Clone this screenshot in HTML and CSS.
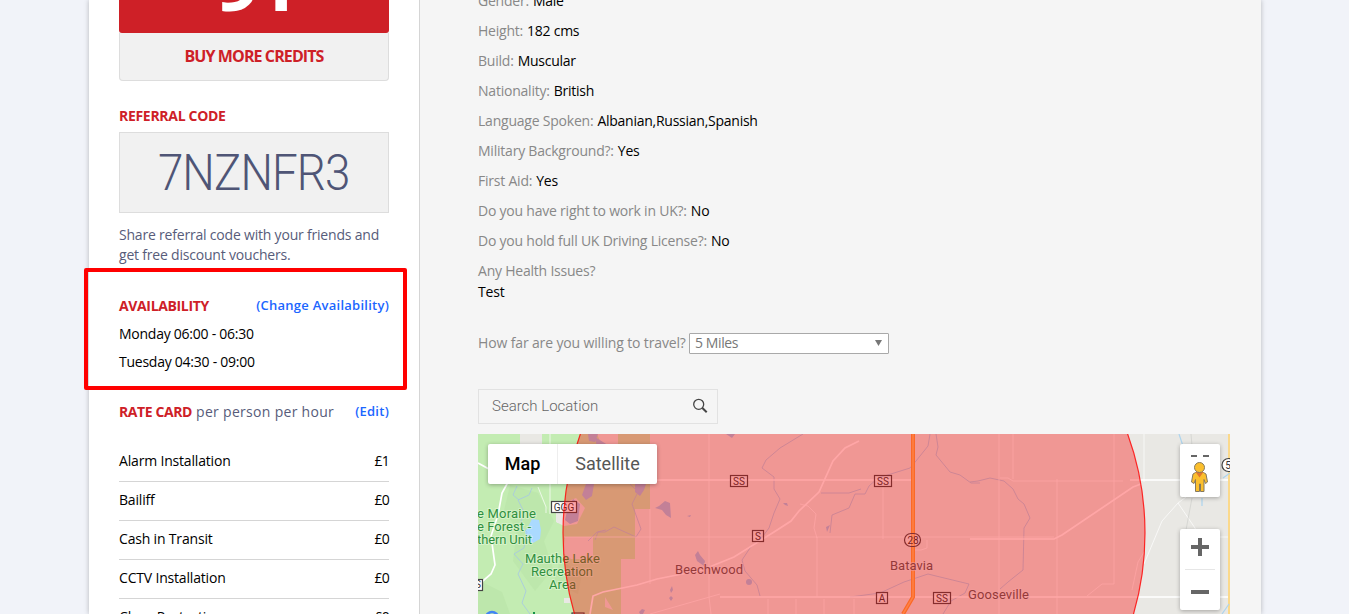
FILE: index.html
```html
<!DOCTYPE html>
<html lang="en">
<head>
<meta charset="utf-8">
<title>Profile</title>
<link rel="stylesheet" href="styles.css">
</head>
<body>
<div class="page">
  <aside class="sidebar">
    <div class="credits">
      <div class="credits-count"><div class="credits-number">91</div></div>
      <div class="credits-buy"><span>BUY MORE CREDITS</span></div>
    </div>
    <h3 class="heading referral-title">REFERRAL CODE</h3>
    <div class="referral-code"><span>7NZNFR3</span></div>
    <p class="referral-note">Share referral code with your friends and<br><span class="note-end">get free discount vouchers.</span></p>
    <section class="availability">
      <div class="row-head"><h3 class="heading avail">AVAILABILITY</h3><a class="link">(Change Availability)</a></div>
      <div class="slot">Monday 06:00 - 06:30</div>
      <div class="slot">Tuesday 04:30 - 09:00</div>
    </section>
    <div class="row-head rate-head"><h3 class="heading rate">RATE CARD</h3><span class="per">per person per hour</span><a class="link edit">(Edit)</a></div>
    <ul class="rates">
      <li><span>Alarm Installation</span><b>£1</b></li>
      <li><span>Bailiff</span><b>£0</b></li>
      <li><span>Cash in Transit</span><b>£0</b></li>
      <li><span>CCTV Installation</span><b>£0</b></li>
      <li><span>Close Protection</span><b>£0</b></li>
    </ul>
  </aside>
  <main class="main">
    <dl class="facts">
      <div><dt>Gender:</dt><dd>Male</dd></div>
      <div><dt>Height:</dt><dd>182 cms</dd></div>
      <div><dt>Build:</dt><dd>Muscular</dd></div>
      <div><dt>Nationality:</dt><dd>British</dd></div>
      <div><dt>Language Spoken:</dt><dd>Albanian,Russian,Spanish</dd></div>
      <div><dt>Military Background?:</dt><dd>Yes</dd></div>
      <div><dt>First Aid:</dt><dd>Yes</dd></div>
      <div><dt>Do you have right to work in UK?:</dt><dd>No</dd></div>
      <div><dt>Do you hold full UK Driving License?:</dt><dd>No</dd></div>
      <div><dt>Any Health Issues?</dt></div>
    </dl>
    <div class="health">Test</div>
    <div class="travel"><span class="travel-label">How far are you willing to travel?</span>
      <div class="select"><span>5 Miles</span><svg width="7" height="6" viewBox="0 0 7 6"><path d="M0 0h7L3.500 6z" fill="#777"/></svg></div>
    </div>
    <div class="search"><span>Search Location</span>
      <svg width="16" height="16" viewBox="0 0 16 16" fill="none" stroke="#444"><circle cx="6.700" cy="6.300" r="5" stroke-width="1.300"/><path d="M10.400 10l4.300 4.300" stroke-width="2"/></svg>
    </div>
    <div class="map">
      <svg class="map-canvas" width="752" height="180" viewBox="478 434 752 180">
        <rect x="478" y="434" width="752" height="180" fill="#e9e8e4"/>
        <path class="park" d="M478 434H650V509H635V559H621V614H478z"/>
        <path fill="#b5e3a3" opacity=".45" d="M510 485l28 8 16 28-10 20 9 28-18 22-22-30 4-32-13-18zM478 580l24 12 8 22h-32zM560 560l22 14-4 20-24-12z"/>
        <path fill="#e9e8e4" d="M520 434h22v10h-22zM556 506l20-8 9 10-8 16-13 2-8-4zM565 537h28v22h-22l-8-6zM597 434h21v12h-16zM564 598h6v5h-6zM605 597l8 13-8-3zM556 512l7-7v18h-6z"/>
        <g class="water">
          <path class="lake" d="M525 532l3-5 4-8 7 1 2 10-1 9-7 4-5-2z"/>
          <path d="M586 484h8l-2 12-6 4-4-5zM635 484h11l-2 6-4 6-5-4zM567 511l6-12 7 5-2 17-8 3-5-4zM595 437l8 5 8 5-8 7-6-6zM588 434h10l-3 8-6-1zM655 508l4-2 6-5 5 2 1 15-5-3-4-5zM695 555l3-4 2 4 5 6-1 5-7-5zM670 590l2-4 1 4-2 3zM669 598l2-2 2 2-2 3zM639 612l3-3 3 1-2 4h-3zM687 516l4-1-1 2z"/>
          <circle cx="749" cy="582" r="3"/><path d="M726 434h9l-3 4zM826 527l4-2-3 7zM783 503l4 0 1 3-3-1z"/>
        </g>
        <g class="stream">
          <path d="M532 488l-3 7-11 5 6 12-4 13 7 7-3 16-10 6 9 10-5 10 8 17-4 12 8 11M519 500l-6-5 4-9M595 540l3-8 7 0 9-5 22 10 5-8-9-25 6-12-10-10M588 541l9-9 9-2M803 434l-23 14-14 12-4 8 12 9 0 12 6 10-6 14-5 15-6 8-13 12-8 12 3 11 12 14 3 11M930 434l-2 12-12 15-6 7-32 10-9 8-4 8-10 0-6 14-17 7-2 18M821 493l28 0 12-4M936 434l2 13-2 8 14 17 10 3 11 8 9 0M850 597l30-4 24-11 24-8 8 2 33 8-4 9-14 8-8 13M970 482l8-1 12-3 14 3 9 8 5 10 6 5 6 14-6 10-1 42-15 12-8 7"/>
        </g>
        <g class="roads">
          <path d="M478 463l20 11 14-6M512 475l-10 18-4 22-7 21 4 29-4 9-13 11M652 480H913M1130 480h100M590 614l3-18 10-4 34-7 20-6 45-9 32-13 40-25 17-11 8-10 20-19 14-31 12-13 14-7M720 597H960M960 597h270M970 539h84l8-4 71-48 8-3" />
        </g>
        <g class="roads thin">
          <path d="M564 537h490M709 434v163l2 17M650 509v75M650 614l70-20M817 537v60M883 482v57M800 504l8 2 8 8-2 14 3 10M999 434v180M1013 434v45M1057 479v135M1114 434v150h-12l-15 12M1144 434v48M1144 564l18-43 16-18 8-6M1178 503l17 25 4 16M1200 537h30M768 599v15M796 599v15M824 599v15M854 599v15M927 540v8l-6 2h-9M1000 478h8l5 3h110M1132 590l6-28 6-10M550 434v80M538 487l8 20 0 6"/>
        </g>
        <path stroke="#f9a13a" stroke-width="4" fill="none" d="M913 434v163l-10 17"/><path stroke="#ffc56b" stroke-width="1.500" fill="none" d="M913 434v163l-10 17"/>
        <path stroke="#fbd98b" stroke-width="2" fill="none" d="M1229 434v180"/>
        <path stroke="#add4ee" stroke-width="1.200" fill="none" d="M1179 434l4 12M1202 498v8M1230 473l-7 5M1229 604l-7 10"/>
        <path stroke="#cacbc8" stroke-width=".6" fill="none" d="M1191 434l1 12M1192 498l-6 32"/>
        <g class="place park-name">
          <text x="477" y="518" textLength="59">e Moraine</text><text x="477" y="531" textLength="54">e Forest -</text><text x="477" y="544" textLength="55">thern Unit</text>
          <text x="525" y="563" textLength="75">Mauthe Lake</text><text x="531" y="576" textLength="62">Recreation</text><text x="549" y="589" textLength="27">Area</text>
        </g>
        <g class="place town"><text x="675" y="574" textLength="68">Beechwood</text><text x="890" y="570" textLength="43">Batavia</text><text x="968" y="599" textLength="61">Gooseville</text></g>
        <g class="shield">
          <rect class="solid" x="551.500" y="501.500" width="25" height="11"/><rect x="730.500" y="475.500" width="17" height="11"/><rect x="874.500" y="475.500" width="17" height="11"/><rect x="752.500" y="530.500" width="11" height="11"/><rect x="876.500" y="592.500" width="11" height="11"/><rect x="933.500" y="592.500" width="17" height="11"/><rect class="solid" x="470.500" y="579.500" width="12" height="11"/><rect x="904.500" y="533.500" width="16" height="13" rx="6.500"/><circle class="solid" cx="1228.500" cy="465" r="6.500"/><rect x="572" y="613" width="12" height="6"/>
          <text x="564" y="511">GGG</text><text x="739" y="485">SS</text><text x="883" y="485">SS</text><text x="758" y="540">S</text><text x="882" y="602">A</text><text x="942" y="602">SS</text><text x="913" y="543.500">28</text><text x="1228" y="469">5</text><text x="478" y="588">S</text>
        </g>
        <circle cx="854" cy="533" r="291" fill="#f00" fill-opacity=".35" stroke="#f00" stroke-opacity=".8" stroke-width="1.200"/>
        <circle cx="492" cy="618" r="6" fill="none" stroke="#4285f4" stroke-width="2.500"/><path fill="#159447" d="M533 612h2v2h-2z"/>
      </svg>
      <div class="map-type"><span class="on">Map</span><span>Satellite</span></div>
      <div class="pegman">
        <svg width="40" height="53" viewBox="0 0 40 53"><path fill="#666" d="M11 11h6v2h-6zM23 11h6v2h-6z"/><path fill="#fbbf2d" stroke="#85795e" stroke-width="1" d="M15.500 28.500h8l2.500 1.500 1.500 8-2 1.500-1.500-4v12h-3.500V40h-1v7.500h-4v-12l-1.500 4-2.500-1.500 1.500-8z"/><path fill="#e2762d" d="M15.500 28h8l-4 5.500z"/><circle cx="19.500" cy="23.500" r="5" fill="#fbbf2d" stroke="#85795e"/></svg>
      </div>
      <div class="zoom"><svg width="40" height="81" viewBox="0 0 40 81"><path fill="#666" d="M11 16h7V9h4v7h7v4h-7v7h-4v-7h-7zM11 61h18v4H11z"/><path fill="#e6e6e6" d="M5 40h30v1H5z"/></svg></div>
    </div>
  </main>
</div>
<div class="highlight"></div>
</body>
</html>
```
FILE: styles.css
```css
* { box-sizing: border-box; }
body { margin: 0; height: 614px; overflow: hidden; background: #f1f3f9; font: 14px/20px "Open Sans", "Noto Sans", sans-serif; color: #000; }
.page { display: flex; width: 1172px; height: 614px; margin-left: 89px; background: #f5f5f5; box-shadow: 0 0 5px rgba(0,0,0,.25); overflow: hidden; }
.sidebar { width: 331px; height: 614px; flex: none; padding: 0 30px; background: #fff; border-right: 1px solid #d5d5d5; overflow: hidden; }
.credits { border-radius: 0 0 4px 4px; background: #f1f1f1; }
.credits-count { display: flex; justify-content: center; height: 33px; background: #ce2027; border-radius: 0 0 3px 3px; overflow: hidden; }
.credits-number { height: 76px; margin-top: -56px; padding-left: 3px; color: #fff; font-size: 76px; font-weight: 700; line-height: 76px; letter-spacing: -4px; }
.credits-buy { height: 48px; border: 1px solid #ddd; border-top: 0; border-radius: 0 0 4px 4px; text-align: center; font-size: 16px; font-weight: 700; line-height: 47px; color: #ce2027; letter-spacing: -.9px; }
.heading { margin: 0; font-size: 14px; line-height: 20px; font-weight: 700; color: #ce2027; }
.referral-title { margin-top: 25px; letter-spacing: -.3px; }
.referral-code { height: 81px; margin-top: 6px; background: #f1f1f1; border: 1px solid #ddd; text-align: center; font-family: Roboto, sans-serif; font-size: 50px; font-weight: 300; line-height: 80px; color: #4f5576; letter-spacing: -1px; }
.referral-code span { display: inline-block; transform: scaleX(.915); }
.referral-note { margin: 12px 0 0; color: #575c7a; white-space: nowrap; letter-spacing: -.2px; }
.availability { margin-top: 31px; }
.row-head { display: flex; height: 20px; white-space: nowrap; }
.avail { letter-spacing: -.35px; }
.rate { letter-spacing: -.4px; }
.link { margin-left: auto; color: #1b66ff; font-size: 13px; font-weight: 600; line-height: 19px; letter-spacing: .25px; }
.slot { margin-top: 8px; letter-spacing: -.25px; }
.rate-head { margin-top: 30px; }
.per { margin-left: 4px; color: #575c7a; letter-spacing: .3px; }
.rates { list-style: none; margin: 21px 0 0; padding: 0; }
.rates li { display: flex; justify-content: space-between; height: 39px; padding-top: 8px; border-bottom: 1px solid #d5d5d5; letter-spacing: -.18px; }
.rates b { font-weight: 400; letter-spacing: -.8px; }
.main { width: 841px; padding-left: 58px; }
.facts { margin: -9px 0 0; }
.facts div { display: flex; height: 30px; line-height: 20px; white-space: nowrap; }
.facts dt { color: #888; letter-spacing: -.22px; }
.facts dd { margin: 0 0 0 4px; letter-spacing: -.25px; }
.health { margin-top: -9px; height: 20px; letter-spacing: -.2px; }
.travel { display: flex; height: 21px; margin-top: 31px; color: #777; white-space: nowrap; }
.travel-label { width: 211px; letter-spacing: -.14px; color: #888; }
.select { display: flex; align-items: center; justify-content: space-between; width: 200px; height: 21px; padding: 0 6px 1px 5px; border: 1px solid #a9a9a9; border-radius: 1px; background: #fff; letter-spacing: -.4px; }
.search { display: flex; align-items: center; justify-content: space-between; width: 240px; height: 35px; margin-top: 35px; padding: 0 9px 1px 13px; border: 1px solid #e2e2e2; font: 300 15px Roboto, sans-serif; color: #666; }
.map { position: relative; width: 752px; height: 180px; margin-top: 10px; overflow: hidden; }
.map-canvas { display: block; font-family: Roboto, sans-serif; }
.park { fill: #c3ecb2; }
.water path, .water circle { fill: #a3c5e8; }
.water .lake { fill: #aadaff; }
.stream path { fill: none; stroke: #a6c6e5; stroke-width: .8; }
.roads path { fill: none; stroke: #fff; stroke-width: 1.7; }
.thin path { stroke-width: .7; }
.place { font-size: 13px; paint-order: stroke; stroke-width: 2px; stroke-opacity: .6; }
.park-name { fill: #2f8f3e; stroke: #e3f7d8; }
.town { fill: #5a5a5a; stroke: #eee; }
.shield rect, .shield circle { fill: #fff; fill-opacity: .25; stroke: #444; stroke-width: 1.2; }
.shield .solid { fill-opacity: 1; }
.shield text { font-size: 10px; text-anchor: middle; fill: #333; }
.map-type, .pegman, .zoom { position: absolute; background: #fff; border-radius: 2px; box-shadow: 0 1px 4px rgba(0,0,0,.3); overflow: hidden; }
.map-type { left: 10px; top: 10px; display: flex; height: 40px; font: 18px/40px Roboto, sans-serif; color: #565656; }
.map-type span { width: 99px; text-align: center; }
.map-type .on { width: 70px; font-weight: 500; color: #000; border-right: 1px solid #eee; }
.pegman { left: 702px; top: 10px; width: 40px; height: 53px; }
.zoom { left: 702px; top: 95px; width: 40px; height: 81px; }
.highlight { position: absolute; left: 84px; top: 268px; width: 323px; height: 122px; border: 4px solid #f00; border-radius: 2px; }
```
